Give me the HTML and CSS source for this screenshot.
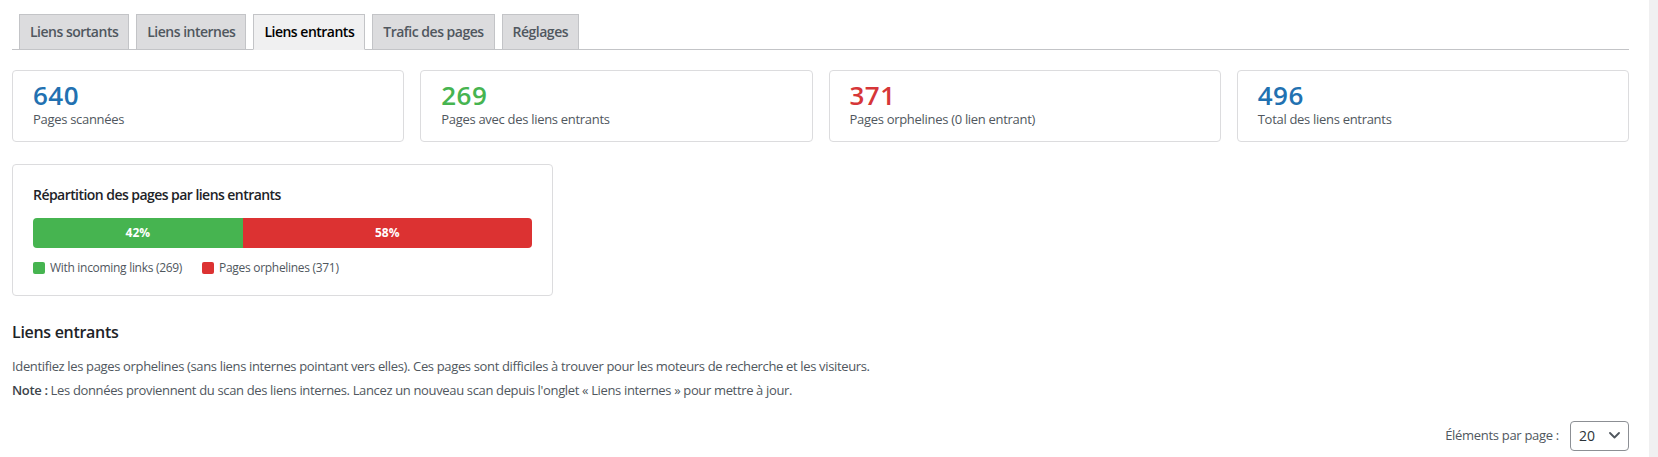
FILE: index.html
```html
<!DOCTYPE html>
<html lang="fr">
<head>
<meta charset="utf-8">
<title>Liens entrants</title>
<link rel="stylesheet" href="styles.css">
</head>
<body>
<div class="screen">
  <main class="page">
    <nav class="tabs">
      <a class="tab">Liens sortants</a>
      <a class="tab">Liens internes</a>
      <a class="tab tab-active">Liens entrants</a>
      <a class="tab">Trafic des pages</a>
      <a class="tab">Réglages</a>
    </nav>

    <section class="stats">
      <div class="stat-card">
        <div class="stat-number num-blue">640</div>
        <div class="stat-label">Pages scannées</div>
      </div>
      <div class="stat-card">
        <div class="stat-number num-green">269</div>
        <div class="stat-label">Pages avec des liens entrants</div>
      </div>
      <div class="stat-card">
        <div class="stat-number num-red">371</div>
        <div class="stat-label">Pages orphelines (0 lien entrant)</div>
      </div>
      <div class="stat-card">
        <div class="stat-number num-blue">496</div>
        <div class="stat-label">Total des liens entrants</div>
      </div>
    </section>

    <section class="chart-card">
      <h4 class="chart-title">Répartition des pages par liens entrants</h4>
      <div class="bar">
        <div class="bar-seg seg-green" style="width:42%">42%</div>
        <div class="bar-seg seg-red" style="width:58%">58%</div>
      </div>
      <div class="legend">
        <span class="legend-item"><span class="swatch seg-green"></span>With incoming links (269)</span>
        <span class="legend-item"><span class="swatch seg-red"></span>Pages orphelines (371)</span>
      </div>
    </section>

    <h3 class="section-title">Liens entrants</h3>
    <p class="desc">Identifiez les pages orphelines (sans liens internes pointant vers elles). Ces pages sont difficiles à trouver pour les moteurs de recherche et les visiteurs.</p>
    <p class="desc"><strong>Note :</strong> Les données proviennent du scan des liens internes. Lancez un nouveau scan depuis l'onglet « Liens internes » pour mettre à jour.</p>

    <div class="per-page">
      <label class="per-page-label">Éléments par page :</label>
      <div class="select">
        <span>20</span>
        <svg class="chevron" width="11" height="7" viewBox="0 0 11 7"><polyline points="1,1 5.5,5.5 10,1" fill="none" stroke="#50575e" stroke-width="1.8" stroke-linecap="round" stroke-linejoin="round"/></svg>
      </div>
    </div>
  </main>
  <div class="scrollbar"></div>
</div>
</body>
</html>
```

FILE: styles.css
```css
* { box-sizing: border-box; }

html, body {
  margin: 0;
  padding: 0;
  background: #fff;
}

body {
  font-family: "Open Sans", "Noto Sans", sans-serif;
  font-size: 13px;
  line-height: 1.5;
  color: #3c434a;
}

.screen {
  display: flex;
  height: 457px;
  overflow: hidden;
}

.page {
  flex: 1;
  padding: 5px 20px 0 12px;
  min-width: 0;
}

.scrollbar {
  width: 9px;
  background: #f0f0f1;
}

/* Tabs */
.tabs {
  display: flex;
  align-items: flex-end;
  padding-top: 9px;
  border-bottom: 1px solid #c3c4c7;
}

.tab {
  margin-left: 7px;
  margin-bottom: -1px;
  padding: 5px 10px;
  font-size: 14px;
  line-height: 24px;
  font-weight: 600;
  color: #50575e;
  background: #dcdcde;
  border: 1px solid #c3c4c7;
  border-bottom: 1px solid #c3c4c7;
  white-space: nowrap;
  letter-spacing: -0.5px;
}

.tab-active {
  color: #000;
  background: #f0f0f1;
  border-bottom-color: #f0f0f1;
}

/* Stat cards */
.stats {
  display: grid;
  grid-template-columns: repeat(4, 1fr);
  gap: 16px;
  margin-top: 20px;
}

.stat-card {
  border: 1px solid #dcdcde;
  border-radius: 4px;
  padding: 10px 20px 12px;
  background: #fff;
}

.stat-number {
  font-size: 26px;
  line-height: 29px;
  font-weight: 600;
  letter-spacing: 0.5px;
}

.num-blue { color: #2271b1; }
.num-green { color: #46b450; }
.num-red { color: #d63638; }

.stat-label {
  font-size: 13px;
  line-height: 19px;
  color: #50575e;
  letter-spacing: -0.3px;
}

/* Chart card */
.chart-card {
  width: 541px;
  margin-top: 22px;
  padding: 20px 20px 18px;
  border: 1px solid #dcdcde;
  border-radius: 4px;
}

.chart-title {
  margin: 0 0 13px;
  font-size: 14px;
  line-height: 20px;
  font-weight: 600;
  color: #1d2327;
  letter-spacing: -0.55px;
}

.bar {
  display: flex;
  height: 30px;
  border-radius: 4px;
  overflow: hidden;
}

.bar-seg {
  display: flex;
  align-items: center;
  justify-content: center;
  color: #fff;
  font-size: 12px;
  font-weight: 700;
}

.seg-green { background: #46b450; }
.seg-red { background: #dc3232; }

.legend {
  display: flex;
  gap: 20px;
  margin-top: 11px;
  font-size: 12px;
  line-height: 18px;
  color: #50575e;
  letter-spacing: -0.3px;
}

.legend-item {
  display: flex;
  align-items: center;
  gap: 5px;
}

.swatch {
  width: 12px;
  height: 12px;
  border-radius: 2px;
}

/* Section */
.section-title {
  margin: 24px 0 13px;
  font-size: 16px;
  line-height: 24px;
  font-weight: 600;
  color: #1d2327;
  letter-spacing: -0.3px;
}

.desc {
  margin: 0 0 4.5px;
  font-size: 13px;
  line-height: 19.5px;
  color: #50575e;
  letter-spacing: -0.35px;
}

.desc strong {
  font-weight: 600;
  color: #3c434a;
}

/* Per page */
.per-page {
  display: flex;
  justify-content: flex-end;
  align-items: center;
  gap: 11px;
  margin-top: 20px;
}

.per-page-label {
  font-size: 13px;
  line-height: 19.5px;
  color: #50575e;
  letter-spacing: -0.3px;
}

.select {
  display: flex;
  align-items: center;
  justify-content: space-between;
  width: 59px;
  height: 30px;
  padding: 0 8px 0 8px;
  border: 1px solid #8c8f94;
  border-radius: 4px;
  font-size: 14px;
  color: #2c3338;
}

.chevron {
  display: block;
}
```
